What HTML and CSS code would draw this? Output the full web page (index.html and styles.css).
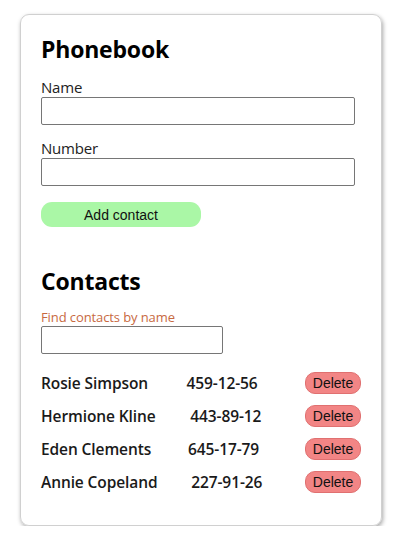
FILE: index.html
```html
<!DOCTYPE html>
<html lang="en">
<head>
<meta charset="utf-8">
<title>Phonebook</title>
<link rel="stylesheet" href="styles.css">
</head>
<body>
<main class="card">
  <h1 class="title">Phonebook</h1>
  <form class="form">
    <label class="field">
      <span class="field-label">Name</span>
      <input class="input" type="text" name="name">
    </label>
    <label class="field">
      <span class="field-label">Number</span>
      <input class="input" type="tel" name="number">
    </label>
    <button class="add-btn" type="button">Add contact</button>
  </form>
  <h2 class="title title-contacts">Contacts</h2>
  <label class="filter">
    <span class="filter-label">Find contacts by name</span>
    <input class="input input-filter" type="text" name="filter">
  </label>
  <ul class="list">
    <li class="item"><span class="name">Rosie Simpson</span><span class="number">459-12-56</span><button class="del-btn" type="button">Delete</button></li>
    <li class="item"><span class="name">Hermione Kline</span><span class="number">443-89-12</span><button class="del-btn" type="button">Delete</button></li>
    <li class="item"><span class="name">Eden Clements</span><span class="number">645-17-79</span><button class="del-btn" type="button">Delete</button></li>
    <li class="item"><span class="name">Annie Copeland</span><span class="number">227-91-26</span><button class="del-btn" type="button">Delete</button></li>
  </ul>
</main>
</body>
</html>
```
FILE: styles.css
```css
* { box-sizing: border-box; }
body {
  margin: 0;
  background: #fff;
  font-family: "Open Sans", "Noto Sans", sans-serif;
  color: #111;
}
.card {
  margin: 14px 0 0 20px;
  width: 362px;
  height: 512px;
  border: 1px solid #d0d0d0;
  border-radius: 9px;
  box-shadow: 1px 2px 4px rgba(0,0,0,0.35);
  padding: 18px 20px 0 20px;
  display: flex;
  flex-direction: column;
}
.title {
  margin: 0;
  font-size: 23px;
  line-height: 32px;
  font-weight: 700;
  color: #000;
  letter-spacing: -0.2px;
}
.form {
  display: flex;
  flex-direction: column;
  margin-top: 13px;
}
.field {
  display: flex;
  flex-direction: column;
  margin-bottom: 14px;
}
.field-label {
  font-size: 15px;
  line-height: 19px;
  color: #222;
  letter-spacing: -0.2px;
}
.input {
  display: block;
  height: 28px;
  width: 314px;
  border: 1px solid #767676;
  border-radius: 2px;
  margin: 0;
  padding: 1px 2px;
  font: inherit;
}
.add-btn {
  align-self: flex-start;
  margin-top: 2px;
  width: 160px;
  height: 25px;
  border: none;
  border-radius: 11px;
  background: #aaf7a6;
  font-family: "Liberation Sans", Arial, sans-serif;
  font-size: 14px;
  color: #111;
  padding: 0;
}
.title-contacts {
  margin-top: 38px;
}
.filter {
  display: flex;
  flex-direction: column;
  align-items: flex-start;
  margin-top: 11px;
}
.filter-label {
  font-size: 13px;
  line-height: 18px;
  color: #c8693f;
  letter-spacing: -0.1px;
}
.input-filter {
  width: 182px;
}
.list {
  list-style: none;
  margin: 18px 0 0;
  padding: 0;
  display: flex;
  flex-direction: column;
  gap: 11px;
}
.item {
  display: flex;
  align-items: center;
  justify-content: space-between;
  height: 22px;
}
.name, .number {
  font-size: 15.5px;
  font-weight: 600;
  color: #1a1a1a;
  letter-spacing: -0.1px;
}
.number {
  margin-right: 9px;
}
.del-btn {
  width: 56px;
  height: 22px;
  border: 1px solid #e07070;
  border-radius: 10px;
  background: #f28585;
  font-family: "Liberation Sans", Arial, sans-serif;
  font-size: 14px;
  color: #111;
  padding: 0;
}
```
